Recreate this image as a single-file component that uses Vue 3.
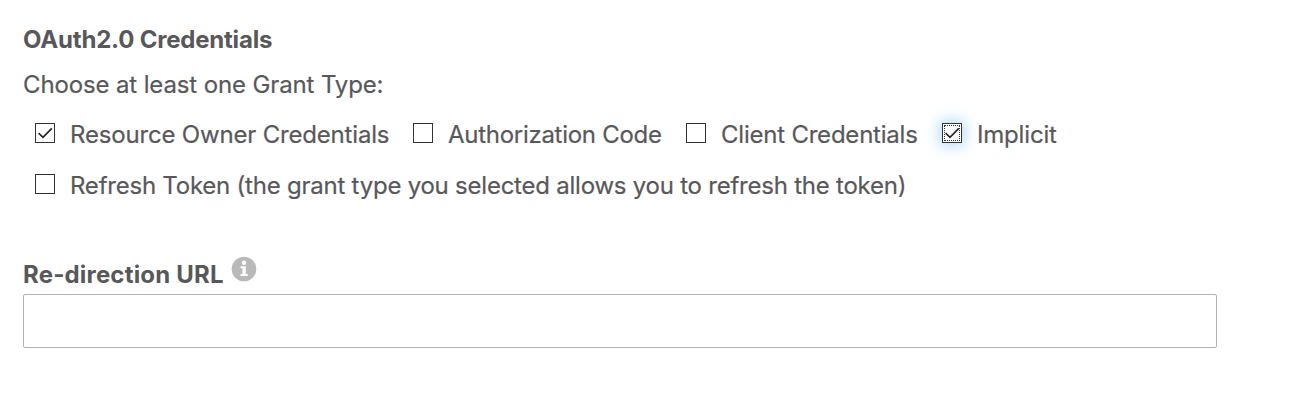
<script setup>
const grants = [
  { id: 'owner', label: 'Resource Owner Credentials', checked: true },
  { id: 'code', label: 'Authorization Code' },
  { id: 'client', label: 'Client Credentials' },
  { id: 'implicit', label: 'Implicit', checked: true, focused: true },
]
const refresh = { id: 'refresh', label: 'Refresh Token (the grant type you selected allows you to refresh the token)' }
const rows = [grants, [refresh]]
</script>

<template>
  <main class="form">
    <h2 class="title"><span>OAuth2.0 Credentials</span></h2>
    <p class="hint"><span>Choose at least one Grant Type:</span></p>
    <div v-for="(row, i) in rows" :key="i" class="row">
      <label v-for="g in row" :key="g.id" class="option" :class="g.id">
        <span class="box" :class="{ focused: g.focused }">
          <svg v-if="g.checked" width="18" height="18" viewBox="0 0 18 18">
            <path d="M2.6 9.2 L7 13.3 L15.8 4.3" fill="none" stroke="#262626" stroke-width="1.7" />
          </svg>
        </span>
        <span class="text">{{ g.label }}</span>
      </label>
    </div>
    <div class="urlhead">
      <span class="urllabel">Re-direction URL</span>
      <svg class="info" width="26" height="26" viewBox="0 0 26 26">
        <circle cx="13" cy="13" r="12.3" fill="#b9b9b9" />
        <circle cx="13" cy="6.7" r="2.2" fill="#fff" />
        <path d="M9.5 10.3H14.8V18H16.7V20H9.5V18H11.4V12.2H9.5Z" fill="#fff" />
      </svg>
    </div>
    <input class="url" type="text" aria-label="Re-direction URL" />
  </main>
</template>

<style>
body { background: #fff; overflow: hidden; }
</style>

<style scoped>
.form {
  box-sizing: border-box;
  width: 1295px;
  height: 404px;
  padding: 25px 0 0 23px;
  font: 400 24px/30px Inter, "Liberation Sans", sans-serif;
  color: #58585b;
  white-space: nowrap;
}
.title { margin: 0; font-size: 24px; font-weight: 700; letter-spacing: -0.2px; }
.hint { margin: 15px 0 20px; letter-spacing: -0.13px; }
.hint, .text { -webkit-text-stroke: 0.2px #58585b; }
.row { display: flex; height: 30px; margin-bottom: 21px; padding-left: 12px; }
.option { display: flex; flex: none; }
.box {
  box-sizing: border-box;
  flex: none;
  position: relative;
  width: 20px;
  height: 20px;
  margin: 3px 15px 0 0;
  border: 1px solid #333;
  background: #fff;
}
.box svg { display: block; }
.focused { box-shadow: 0 0 15px 2px #a9d6fa; }
.focused::after {
  content: "";
  position: absolute;
  inset: 1px;
  border: 1px dotted #333;
}
.owner { width: 378px; letter-spacing: -0.18px; }
.code { width: 273px; letter-spacing: -0.28px; }
.client { width: 256px; letter-spacing: -0.22px; }
.implicit { letter-spacing: -0.18px; }
.refresh { letter-spacing: -0.23px; }
.urlhead { display: flex; height: 30px; margin-top: 59px; }
.urllabel { font-weight: 700; width: 208px; letter-spacing: 0.18px; }
.info { margin-top: -4px; }
.url {
  box-sizing: border-box;
  display: block;
  width: 1194px;
  height: 54px;
  margin: 4px 0 0;
  padding: 0 12px;
  border: 1px solid #b3b3b3;
  border-radius: 2px;
  background: #fff;
  font: inherit;
  outline: none;
}
</style>
